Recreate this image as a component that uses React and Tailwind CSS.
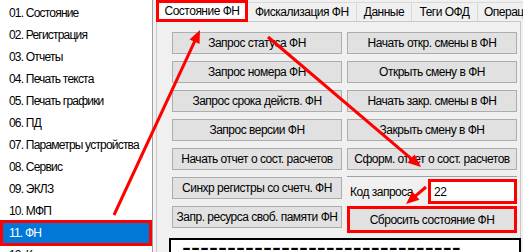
import React from "react";

const items = [
  "01. Состояние",
  "02. Регистрация",
  "03. Отчеты",
  "04. Печать текста",
  "05. Печать графики",
  "06. ПД",
  "07. Параметры устройства",
  "08. Сервис",
  "09. ЭКЛЗ",
  "10. МФП",
  "11. ФН",
  "12. Касса",
];

const leftBtns = [
  "Запрос статуса ФН",
  "Запрос номера ФН",
  "Запрос срока действ. ФН",
  "Запрос версии ФН",
  "Начать отчет о сост. расчетов",
  "Синхр регистры со счетч. ФН",
  "Запр. ресурса своб. памяти ФН",
];

const rightBtns = [
  "Начать откр. смены в ФН",
  "Открыть смену в ФН",
  "Начать закр. смены в ФН",
  "Закрыть смену в ФН",
  "Сформ. отчет о сост. расчетов",
];

function Btn({ children }) {
  return (
    <div className="h-[22px] flex items-center justify-center border border-[#adadad] bg-[#e1e1e1] whitespace-nowrap">
      {children}
    </div>
  );
}

function Arrow({ x1, y1, x2, y2 }) {
  const dx = x2 - x1;
  const dy = y2 - y1;
  const len = Math.hypot(dx, dy);
  const ux = dx / len;
  const uy = dy / len;
  const hl = 13;
  const hw = 5.5;
  const bx = x2 - ux * hl;
  const by = y2 - uy * hl;
  const px = -uy;
  const py = ux;
  const pts = `${x2},${y2} ${bx + px * hw},${by + py * hw} ${bx - px * hw},${by - py * hw}`;
  return (
    <g>
      <line x1={x1} y1={y1} x2={bx + ux * 2} y2={by + uy * 2} stroke="#ff0000" strokeWidth="3" />
      <polygon points={pts} fill="#ff0000" />
    </g>
  );
}

export default function App() {
  return (
    <div
      className="relative w-[523px] h-[252px] overflow-hidden bg-[#f0f0f0] flex text-[12px] text-black tracking-[-0.5px]"
      style={{ fontFamily: '"Liberation Sans", Arial, sans-serif' }}
    >
      {/* Left list */}
      <div className="w-[153px] h-full shrink-0 bg-white border-r border-[#a0a0a0] flex flex-col pt-[2px] tracking-[-0.8px]">
        {items.map((t, i) =>
          i === 10 ? (
            <div
              key={t}
              className="relative z-10 h-[26px] -my-[2px] shrink-0 flex items-center pl-[6px] bg-[#0078d7] text-white border-[3px] border-[#ff0000] whitespace-nowrap"
            >
              {t}
            </div>
          ) : (
            <div key={t} className="h-[22px] shrink-0 flex items-center pl-[9px] whitespace-nowrap">
              {t}
            </div>
          )
        )}
      </div>

      <div className="w-[3px] shrink-0" />

      {/* Tab control */}
      <div className="flex-1 flex flex-col min-w-0">
        <div className="h-[22px] flex items-start shrink-0 relative z-10">
          <div className="w-[92px] h-[22px] shrink-0 bg-white border-[3px] border-[#ff0000] flex items-center justify-center whitespace-nowrap">
            Состояние ФН
          </div>
          <div className="mt-[2px] h-[19px] w-[109px] shrink-0 border-t border-r border-[#d9d9d9] flex items-center pl-[7px] whitespace-nowrap">
            Фискализация ФН
          </div>
          <div className="mt-[2px] h-[19px] w-[55px] shrink-0 border-t border-r border-[#d9d9d9] flex items-center justify-center whitespace-nowrap">
            Данные
          </div>
          <div className="mt-[2px] h-[19px] w-[66px] shrink-0 border-t border-r border-[#d9d9d9] flex items-center justify-center whitespace-nowrap">
            Теги ОФД
          </div>
          <div className="mt-[2px] h-[19px] w-[60px] shrink-0 border-t border-[#d9d9d9] flex items-center pl-[6px] whitespace-nowrap overflow-hidden">
            Операции
          </div>
        </div>

        <div className="-mt-[1px] w-[365px] flex-1 border-t border-l border-r border-[#c8c8c8] pl-[15px] pr-[3px] pt-[10px] flex flex-col">
          <div className="grid grid-cols-[170px_170px] gap-x-[5px]">
            <div className="flex flex-col gap-[7px]">
              {leftBtns.map((t) => (
                <Btn key={t}>{t}</Btn>
              ))}
            </div>
            <div className="flex flex-col">
              <div className="flex flex-col gap-[7px]">
                {rightBtns.map((t) => (
                  <Btn key={t}>{t}</Btn>
                ))}
              </div>
              <div className="mt-[6px] h-[1px] bg-[#a0a0a0]" />
              <div className="mt-[2px] h-[25px] flex items-center">
                <div className="w-[81px] pl-[3px] whitespace-nowrap">Код запроса</div>
                <div className="w-[89px] h-[25px] bg-white border-[3px] border-[#ff0000] flex items-center pl-[3px]">
                  22
                </div>
              </div>
              <div className="mt-[2px] h-[27px] border-[3px] border-[#ff0000] bg-[#e1e1e1] flex items-center justify-center whitespace-nowrap">
                Сбросить состояние ФН
              </div>
            </div>
          </div>
          <div className="mt-[5px] -ml-[3px] w-[352px] h-[40px] shrink-0 bg-white border-2 border-black overflow-hidden pl-[11px]">
            <div className="text-[27px] leading-[14px] tracking-normal whitespace-nowrap">
              -------------------------------
            </div>
          </div>
        </div>
      </div>

      <svg className="absolute inset-0 pointer-events-none z-20" width="523" height="252" viewBox="0 0 523 252">
        <Arrow x1={114} y1={215} x2={200} y2={30} />
        <Arrow x1={268} y1={37} x2={421} y2={167} />
        <Arrow x1={426} y1={187} x2={406} y2={204} />
      </svg>
    </div>
  );
}
